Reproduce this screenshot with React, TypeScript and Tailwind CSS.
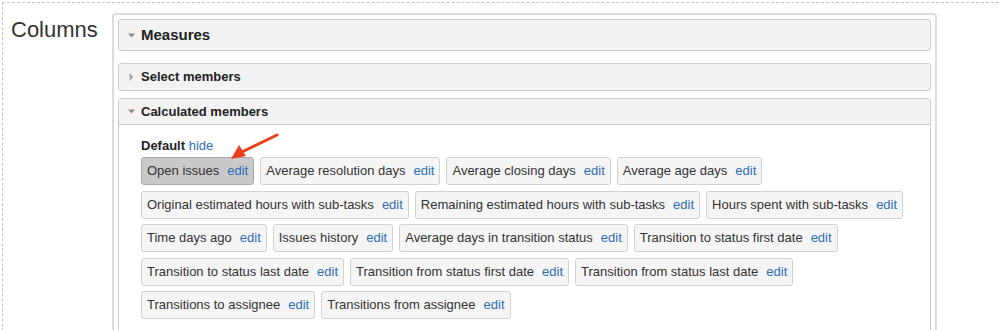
import React from "react";

const rows: string[][] = [
  ["Open issues", "Average resolution days", "Average closing days", "Average age days"],
  ["Original estimated hours with sub-tasks", "Remaining estimated hours with sub-tasks", "Hours spent with sub-tasks"],
  ["Time days ago", "Issues history", "Average days in transition status", "Transition to status first date"],
  ["Transition to status last date", "Transition from status first date", "Transition from status last date"],
  ["Transitions to assignee", "Transitions from assignee"],
];

function DownCaret() {
  return (
    <svg width="7" height="5" viewBox="0 0 7 5" className="shrink-0">
      <path d="M0 0.5 L7 0.5 L3.5 4.5 Z" fill="#8a8a8a" />
    </svg>
  );
}

function RightCaret() {
  return (
    <svg width="5" height="8" viewBox="0 0 5 8" className="shrink-0">
      <path d="M0.5 0 L4.5 4 L0.5 8 Z" fill="#a8a8a8" />
    </svg>
  );
}

function MemberButton({ label, selected }: { label: string; selected?: boolean }) {
  return (
    <div
      className={
        selected
          ? "h-[28px] flex items-center px-[5px] rounded-[3px] border border-[#a9a9a9] bg-[#c9c9c9] whitespace-nowrap"
          : "h-[28px] flex items-center px-[5px] rounded-[3px] border border-[#d2d2d2] bg-[#f5f5f5] whitespace-nowrap"
      }
    >
      <span>{label}</span>
      <span className="ml-[8px] text-[#2f6db5]">edit</span>
    </div>
  );
}

export default function App() {
  return (
    <div className="h-[330px] overflow-hidden bg-white pt-[2px] pl-[2px] font-['Liberation_Sans',Arial,sans-serif] text-[#333]">
      <div className="relative flex h-[400px] border-t border-l border-dashed border-[#c4c4c4]">
        <div className="w-[109px] shrink-0 pl-[8px] pt-[13px] text-[22px] leading-[28px]">Columns</div>

        <div className="mt-[10px] w-[825px] shrink-0 rounded-[4px] border-2 border-[#dcdcdc] p-[4px]">
          {/* Measures */}
          <div className="flex h-[32px] items-center gap-[6px] rounded-[3px] border border-[#cdcdcd] bg-[#f3f3f3] pl-[9px] pt-[1px]">
            <DownCaret />
            <span className="text-[15px] font-bold text-[#222]">Measures</span>
          </div>

          <div className="mt-[12px] flex flex-col gap-[7px]">
            {/* Select members */}
            <div className="flex h-[28px] items-center gap-[7px] rounded-[3px] border border-[#cdcdcd] bg-[#f3f3f3] pl-[10px]">
              <RightCaret />
              <span className="text-[13px] font-bold text-[#222]">Select members</span>
            </div>

            {/* Calculated members */}
            <div className="rounded-[3px] border border-[#cdcdcd]">
              <div className="flex h-[26px] items-center gap-[6px] border-b border-[#cdcdcd] bg-[#f3f3f3] pl-[9px]">
                <DownCaret />
                <span className="text-[13px] font-bold text-[#222]">Calculated members</span>
              </div>
              <div className="pl-[22px] pt-[12px] text-[13px]">
                <div className="mb-[3px] h-[17px] leading-[17px]">
                  <span className="font-bold text-[#222]">Default</span>{" "}
                  <span className="text-[#2f6db5]">hide</span>
                </div>
                <div className="flex flex-col gap-[5.5px]">
                  {rows.map((row, i) => (
                    <div key={i} className="flex gap-[6px]">
                      {row.map((label) => (
                        <MemberButton key={label} label={label} selected={label === "Open issues"} />
                      ))}
                    </div>
                  ))}
                </div>
                <div className="mt-[8px] h-[16px] leading-[16px]">
                  <span className="font-bold text-[#222]">Issue properties</span>{" "}
                  <span className="text-[#2f6db5]">hide</span>
                </div>
              </div>
            </div>
          </div>
        </div>

        {/* red annotation arrow */}
        <svg className="absolute left-[222px] top-[128px]" width="60" height="32" viewBox="0 0 60 32">
          <path d="M52 4 L17 21" stroke="#e8401c" strokeWidth="3" strokeLinecap="round" fill="none" />
          <path d="M6 28 L14 14 L21 25 Z" fill="#e8401c" />
        </svg>
      </div>
    </div>
  );
}
